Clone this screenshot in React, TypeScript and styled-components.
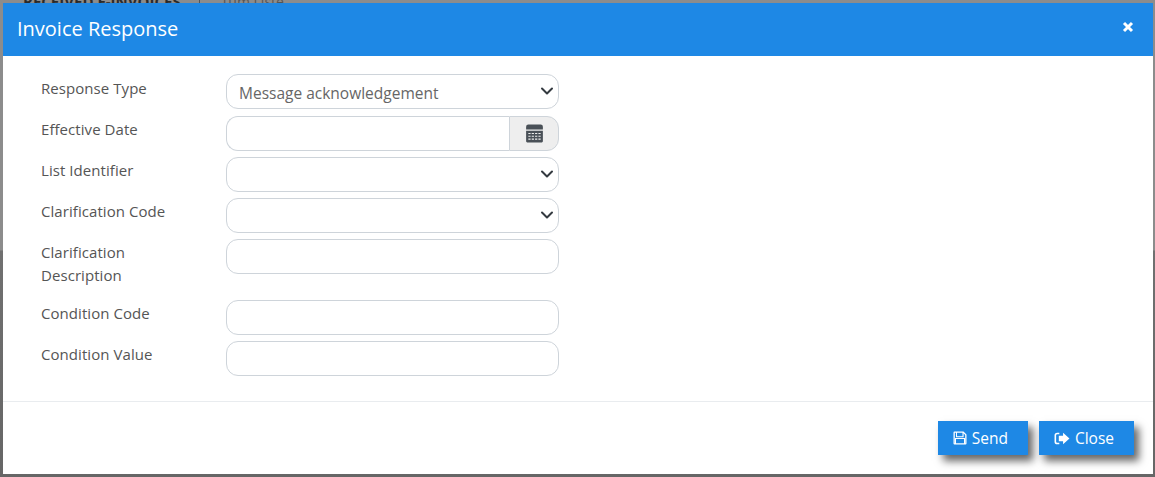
import React from "react";
import styled, { createGlobalStyle } from "styled-components";

const GlobalStyle = createGlobalStyle`
  html, body {
    margin: 0;
    padding: 0;
    height: 100%;
    overflow: hidden;
    background: #8a8a8a;
    font-family: "Open Sans", "Noto Sans", sans-serif;
  }
`;

const fields = [
  { label: "Response Type", kind: "select", value: "Message acknowledgement", height: 42, labelTop: 3 },
  { label: "Effective Date", kind: "date", height: 41, labelTop: 2 },
  { label: "List Identifier", kind: "select", height: 41, labelTop: 2 },
  { label: "Clarification Code", kind: "select", height: 41, labelTop: 2 },
  { label: "Clarification Description", kind: "text", height: 61, labelTop: 2 },
  { label: "Condition Code", kind: "text", height: 41, labelTop: 2 },
  { label: "Condition Value", kind: "text", height: 41, labelTop: 2 },
];

const Chevron = () => (
  <ChevronIcon viewBox="0 0 14 14" width="14" height="14">
    <path d="M2 4.5 7 9.5l5-5" fill="none" stroke="#343a40" strokeWidth="2" strokeLinecap="round" strokeLinejoin="round" />
  </ChevronIcon>
);

const CalendarIcon = () => (
  <svg viewBox="0 0 17 17" width="19" height="19">
    <path d="M3 0.5h11a2 2 0 0 1 2 2V5H1V2.5a2 2 0 0 1 2-2z" fill="#495057" />
    <path fillRule="evenodd" fill="#495057" d="M1 6h15v9.5a1 1 0 0 1-1 1H2a1 1 0 0 1-1-1zM3 8v1h2V8zm3 0v1h2V8zm3 0v1h2V8zm3 0v1h2V8zM3 10.5v1h2v-1zm3 0v1h2v-1zm3 0v1h2v-1zm3 0v1h2v-1zM3 13v1h2v-1zm3 0v1h2v-1zm3 0v1h2v-1zm3 0v1h2v-1z" />
  </svg>
);

const SaveIcon = () => (
  <svg viewBox="0 0 14 14" width="14" height="14">
    <path fillRule="evenodd" fill="#ffffff" d="M1.5 0.5H10.5L13.5 3.5V12.5a1 1 0 0 1-1 1H1.5a1 1 0 0 1-1-1V1.5a1 1 0 0 1 1-1zM4 1.8V5.2H9.5V1.8zM3 8v4.2H11V8zM1.8 1.8V12.2H2V7H12V12.2H12.2V4L10.6 2.2V6.2H3V1.8z" />
  </svg>
);

const SignOutIcon = () => (
  <svg viewBox="0 0 15 14" width="16" height="15">
    <path fill="#ffffff" d="M5 1.5H3A2.5 2.5 0 0 0 .5 4v6A2.5 2.5 0 0 0 3 12.5h2V11H3a1 1 0 0 1-1-1V4a1 1 0 0 1 1-1h2z" />
    <path fill="#ffffff" d="M8.5 1.5 14.5 7l-6 5.5V9.5H4.5v-5h4z" />
  </svg>
);

export default function App() {
  return (
    <>
      <GlobalStyle />
      <Backdrop>
        <PageTitle>
          <strong>RECEIVED E-INVOICES</strong>
          <Divider />
          <span>Tüm Liste</span>
        </PageTitle>
        <Modal>
          <Header>
            <Title>Invoice Response</Title>
            <CloseX viewBox="0 0 12 12" width="12" height="12">
              <path d="M2 2l8 8M10 2l-8 8" stroke="#fff" strokeWidth="3" />
            </CloseX>
          </Header>
          <Body>
            {fields.map((f) => (
              <Row key={f.label} $height={f.height}>
                <Label $top={f.labelTop}>{f.label}</Label>
                {f.kind === "date" ? (
                  <InputGroup>
                    <GroupInput />
                    <Addon>
                      <CalendarIcon />
                    </Addon>
                  </InputGroup>
                ) : f.kind === "select" ? (
                  <Control>
                    {f.value}
                    <Chevron />
                  </Control>
                ) : (
                  <Control />
                )}
              </Row>
            ))}
          </Body>
          <Footer>
            <ActionButton>
              <SaveIcon />
              Send
            </ActionButton>
            <ActionButton>
              <SignOutIcon />
              Close
            </ActionButton>
          </Footer>
        </Modal>
      </Backdrop>
    </>
  );
}

const Backdrop = styled.div`
  position: relative;
  width: 1155px;
  height: 477px;
  padding: 3px 2px 3px 3px;
  box-sizing: border-box;
  overflow: hidden;
  background: linear-gradient(#8c8c8c 0, #8c8c8c 250px, #707070 251px, #666 477px);
`;

const PageTitle = styled.div`
  position: absolute;
  left: 23px;
  top: -9px;
  display: flex;
  align-items: center;
  font-size: 15px;
  color: #2a2a2a;
  white-space: nowrap;
  span {
    color: #555;
    font-size: 14px;
    margin-left: 21px;
  }
`;

const Divider = styled.i`
  width: 1px;
  height: 20px;
  margin-left: 18px;
  background: #555;
`;

const Modal = styled.div`
  position: relative;
  height: 471px;
  background: #fff;
  display: flex;
  flex-direction: column;
`;

const Header = styled.div`
  height: 53px;
  flex: none;
  background: #1e88e5;
  display: flex;
  align-items: center;
  justify-content: space-between;
  padding: 0 19px 0 14px;
`;

const Title = styled.div`
  color: #fff;
  font-size: 20px;
  line-height: 1;
  padding-bottom: 2px;
`;

const CloseX = styled.svg`
  display: block;
  margin-bottom: 5px;
`;

const Body = styled.div`
  flex: 1;
  padding: 18px 38px 0;
`;

const Row = styled.div<{ $height: number }>`
  display: flex;
  align-items: flex-start;
  height: ${(p) => p.$height}px;
`;

const Label = styled.div<{ $top: number }>`
  width: 140px;
  margin-right: 45px;
  padding-top: ${(p) => p.$top}px;
  color: #555;
  font-size: 15px;
  line-height: 23px;
  letter-spacing: 0.06px;
`;

const Control = styled.div`
  width: 333px;
  height: 35px;
  box-sizing: border-box;
  border: 1px solid #ced4da;
  border-radius: 12px;
  background: #fff;
  color: #666;
  font-size: 15.5px;
  padding: 3px 12px 0;
  line-height: 31px;
  position: relative;
`;

const ChevronIcon = styled.svg`
  position: absolute;
  right: 4px;
  top: 9px;
`;

const InputGroup = styled.div`
  width: 333px;
  height: 35px;
  display: flex;
`;

const GroupInput = styled.div`
  flex: 1;
  box-sizing: border-box;
  border: 1px solid #ced4da;
  border-right: 0;
  border-radius: 12px 0 0 12px;
`;

const Addon = styled.div`
  width: 50px;
  box-sizing: border-box;
  border: 1px solid #ced4da;
  border-radius: 0 12px 12px 0;
  background: #eee;
  display: flex;
  align-items: center;
  justify-content: center;
`;

const Footer = styled.div`
  height: 73px;
  flex: none;
  box-sizing: border-box;
  border-top: 1px solid #e9ecef;
  display: flex;
  justify-content: flex-end;
  align-items: flex-start;
  gap: 11px;
  padding: 19px 19px 0 0;
`;

const ActionButton = styled.div`
  height: 34px;
  padding: 0 20px 0 15px;
  background: #1e88e5;
  color: #fff;
  font-size: 15.5px;
  display: flex;
  align-items: center;
  gap: 5px;
  box-shadow: 5px 6px 8px rgba(0, 0, 0, 0.6);
`;
